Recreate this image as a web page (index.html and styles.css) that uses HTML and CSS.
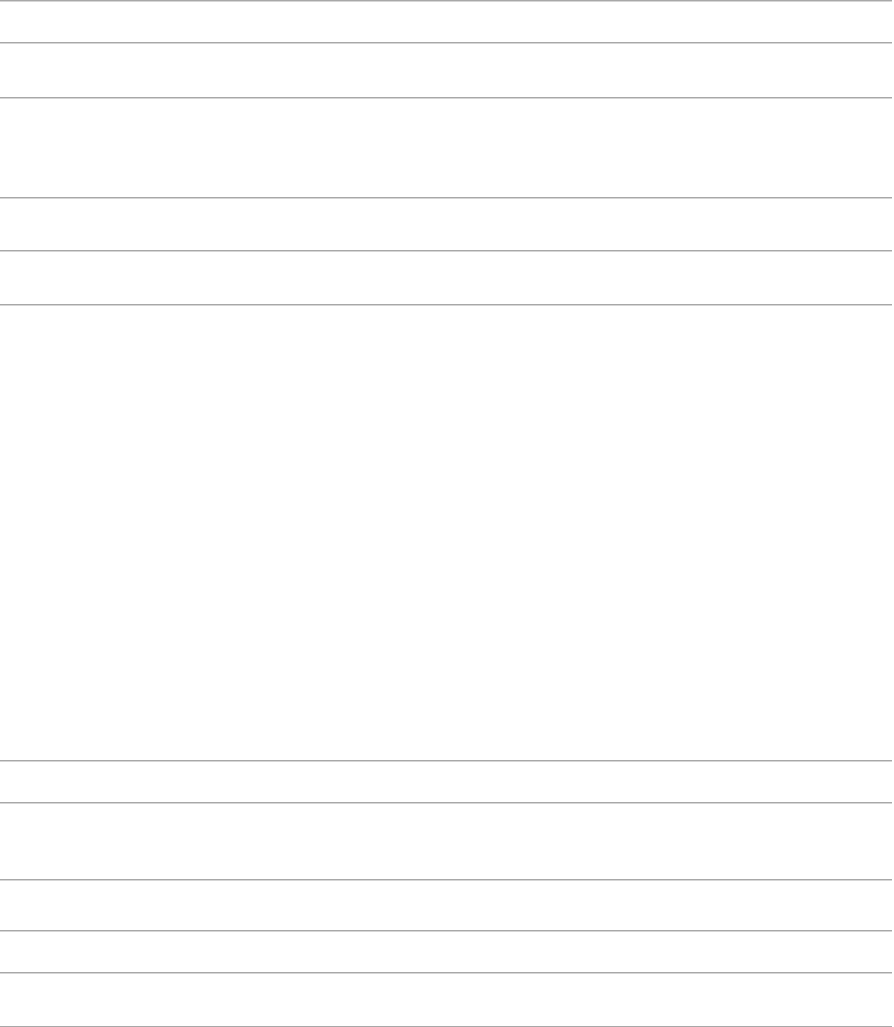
FILE: index.html
```html
<!DOCTYPE html>
<html lang="en">
<head>
    <meta charset="UTF-8">
    <meta name="viewport" content="width=device-width, initial-scale=1.0">
    <title>Sheet</title>
    <link rel="stylesheet" href="styles.css">
</head>
<body>
    <div class="sheet">
        <div class="row row-sm"></div>
        <div class="row row-md"></div>
        <div class="row row-lg"></div>
        <div class="row row-mid"></div>
        <div class="row row-mid2"></div>
        <div class="row row-xl"></div>
        <div class="row row-sm"></div>
        <div class="row row-tall"></div>
        <div class="row row-51"></div>
        <div class="row row-sm"></div>
        <div class="row row-mid2"></div>
        <div class="row row-end"></div>
    </div>
</body>
</html>
```

FILE: styles.css
```css
* {
    margin: 0;
    padding: 0;
    box-sizing: border-box;
}

body {
    font-family: 'Liberation Sans', Arial, sans-serif;
    background-color: #ffffff;
}

.sheet {
    width: 892px;
    display: flex;
    flex-direction: column;
}

.row {
    border-top: 1px solid #a8a8a8;
    box-shadow: inset 0 1px 0 #d6d6d6;
}

.row-sm { height: 42px; }
.row-md { height: 55px; }
.row-lg { height: 100px; }
.row-mid { height: 53px; }
.row-mid2 { height: 54px; }
.row-xl { height: 456px; }
.row-tall { height: 77px; }
.row-51 { height: 51px; }
.row-end { height: 2px; }
```
